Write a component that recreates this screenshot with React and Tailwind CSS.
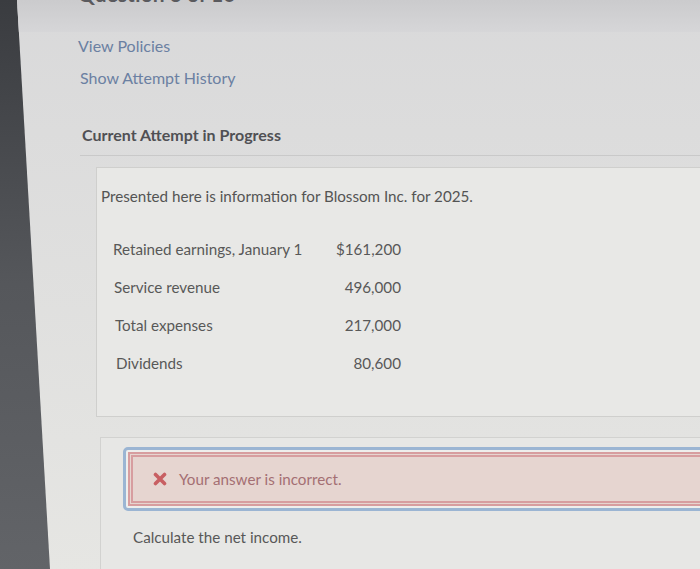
import React from 'react';

const rows = [
    { label: 'Retained earnings, January 1', value: '$161,200' },
    { label: 'Service revenue', value: '496,000' },
    { label: 'Total expenses', value: '217,000' },
    { label: 'Dividends', value: '80,600' },
];

const App = () => {
    return (
        <div className="w-[700px] h-[569px] overflow-hidden bg-gradient-to-b from-[#3a3c40] via-[#55575b] to-[#626468] font-['Lato','Liberation_Sans',sans-serif]">
            <div className="h-full bg-gradient-to-b from-[#d9d9da] to-[#e6e6e3] [clip-path:polygon(17px_0,100%_0,100%_100%,50px_100%)]">
                {/* header, cut off at the top of the photo */}
                <div className="h-[32px] bg-gradient-to-b from-[#cbcbcd] to-[#d6d6d8] pl-[78px] overflow-hidden">
                    <div className="-mt-[19px] text-[21px] font-bold text-[#5a5a5e] leading-[26px]">Question 3 of 10</div>
                </div>

                <div className="pl-[78px] pt-[4px] text-[16px] leading-[20px]">
                    <div className="text-[#6b80a2]">View Policies</div>
                    <div className="mt-[12px] ml-[2px] text-[#6b80a2]">Show Attempt History</div>
                    <div className="mt-[37px] ml-[4px] font-bold text-[#505054]">Current Attempt in Progress</div>
                </div>

                <div className="mt-[10px] ml-[80px] border-t border-[#c9c9c9]"></div>

                {/* info box */}
                <div className="mt-[11px] ml-[96px] w-[640px] h-[250px] border border-[#cfcfcd] bg-[#e8e8e6] pl-[4px] pt-[18px]">
                    <p className="text-[15.2px] leading-[20px] text-[#545454]">Presented here is information for Blossom Inc. for 2025.</p>
                    <div className="mt-[33px] pl-[12px] w-[300px] flex flex-col gap-[18px] text-[15.2px] leading-[20px] text-[#585858]">
                        {rows.map((r, i) => (
                            <div key={r.label} className="flex justify-between" style={{ paddingLeft: i }}>
                                <span>{r.label}</span>
                                <span>{r.value}</span>
                            </div>
                        ))}
                    </div>
                </div>

                {/* answer box */}
                <div className="mt-[20px] ml-[100px] w-[640px] h-[200px] border border-[#d2d2d0] bg-[#e7e7e5] pl-[22px] pt-[9px]">
                    <div className="w-[640px] rounded-[5px] border-[3px] border-[#9bb5d3] bg-[#eeeeec] p-[2px]">
                        <div className="h-[54px] border-[5px] border-double border-[#d79d9f] bg-[#e6d5d0] flex items-center pl-[20px] gap-[12px]">
                            <svg width="14" height="14" viewBox="0 0 14 14" className="text-[#c85f62]">
                                <path d="M2.5 2.5 L11.5 11.5 M11.5 2.5 L2.5 11.5" stroke="currentColor" strokeWidth="3.6" strokeLinecap="round" />
                            </svg>
                            <span className="text-[15.2px] text-[#a46f73]">Your answer is incorrect.</span>
                        </div>
                    </div>
                    <p className="mt-[16px] ml-[10px] text-[15.2px] leading-[20px] text-[#585858]">Calculate the net income.</p>
                </div>
            </div>
        </div>
    );
};

export default App;
